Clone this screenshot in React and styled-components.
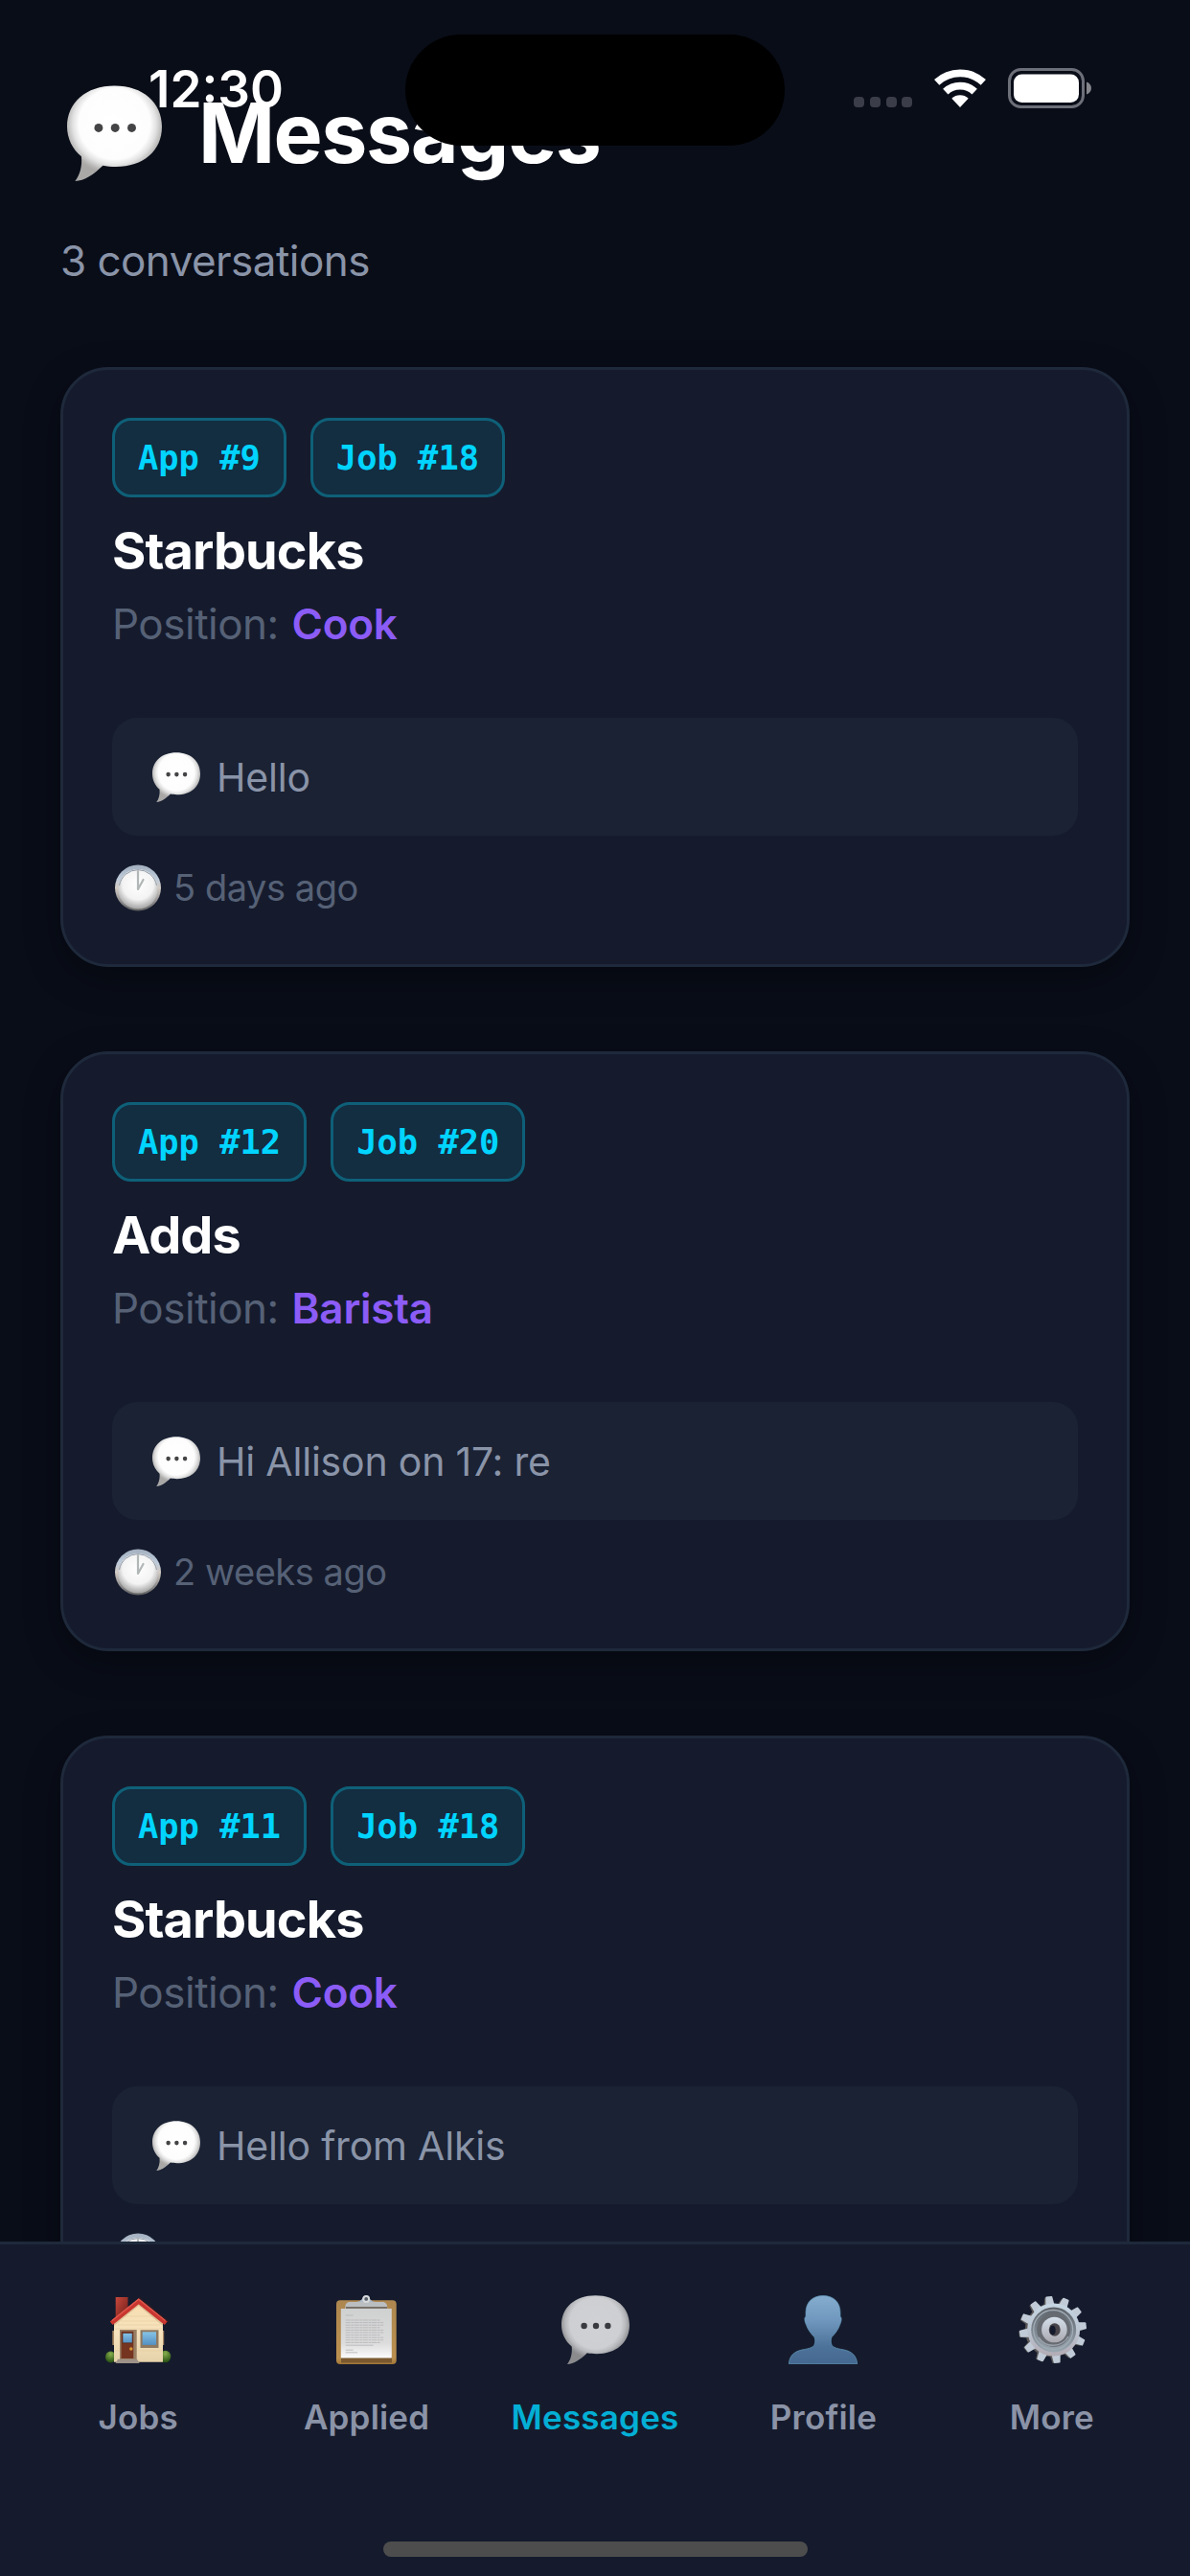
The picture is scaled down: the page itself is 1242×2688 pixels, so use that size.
import React from 'react';
import styled, { createGlobalStyle } from 'styled-components';

const conversations = [
  { id: 1, app: 9, job: 18, company: 'Starbucks', position: 'Cook', message: 'Hello', time: '5 days ago' },
  { id: 2, app: 12, job: 20, company: 'Adds', position: 'Barista', message: 'Hi Allison on 17: re', time: '2 weeks ago' },
  { id: 3, app: 11, job: 18, company: 'Starbucks', position: 'Cook', message: 'Hello from Alkis' },
];

const tabs = [
  { label: 'Jobs', icon: HouseIcon },
  { label: 'Applied', icon: ClipboardIcon },
  { label: 'Messages', icon: BubbleIcon, active: true },
  { label: 'Profile', icon: PersonIcon },
  { label: 'More', icon: GearIcon },
];

export default function App() {
  return (
    <Screen>
      <GlobalStyle />
      <Content>
        <Heading>
          <BubbleIcon width="99" height="100" />
          <Title>Messages</Title>
        </Heading>
        <Subtitle>3 conversations</Subtitle>
        <List>
          {conversations.map(item => (
            <Card key={item.id}>
              <Chips>
                <Chip>App #{item.app}</Chip>
                <Chip>Job #{item.job}</Chip>
              </Chips>
              <Company>{item.company}</Company>
              <Position>
                Position: <strong>{item.position}</strong>
              </Position>
              <Preview>
                <BubbleIcon width="50" height="52" />
                <span>{item.message}</span>
              </Preview>
              <Time>
                <ClockIcon />
                {item.time && <span>{item.time}</span>}
              </Time>
            </Card>
          ))}
        </List>
      </Content>
      <TabBar>
        <Tabs>
          {tabs.map(({ label, icon: Icon, active }) => (
            <Tab key={label} $active={active}>
              <Icon />
              <TabLabel>{label}</TabLabel>
            </Tab>
          ))}
        </Tabs>
        <HomeIndicator />
      </TabBar>
      <StatusBar>
        <Clock>12:30</Clock>
        <Island />
        <StatusIcons>
          <Dots>
            <i />
            <i />
            <i />
            <i />
          </Dots>
          <WifiIcon />
          <BatteryIcon />
        </StatusIcons>
      </StatusBar>
    </Screen>
  );
}

function BubbleIcon({ width = 71, height = 72 }) {
  return (
    <svg width={width} height={height} viewBox="0 0 71 72" preserveAspectRatio="none">
      <defs>
        <radialGradient id="bubbleFill" gradientUnits="userSpaceOnUse" cx="35.5" cy="29" r="38">
          <stop offset="0" stopColor="#fff" />
          <stop offset="0.7" stopColor="#fdfdfd" />
          <stop offset="0.82" stopColor="#e2e2e2" />
          <stop offset="0.95" stopColor="#b4b3b2" />
          <stop offset="1" stopColor="#a9a8a7" />
        </radialGradient>
      </defs>
      <path
        d="M35.5.3C57 .3 71 13 71 31c0 18.500-14 30.200-34.500 30.200-3.500 0-7-.3-9.700-.9C20 67 13 71.800 6 72c3.500-4.500 5.500-11 4.700-18.500C4 48 0 40 0 31 0 13 14 .3 35.500.3z"
        fill="url(#bubbleFill)"
      />
      <circle cx="23.600" cy="32" r="3.200" fill="#444446" />
      <circle cx="36" cy="32" r="3.200" fill="#444446" />
      <circle cx="48.400" cy="32" r="3.200" fill="#444446" />
    </svg>
  );
}

function ClockIcon() {
  return (
    <svg width="48" height="49" viewBox="0 0 48 49" preserveAspectRatio="none">
      <defs>
        <linearGradient id="clockRim" x1="0" y1="0" x2="0" y2="1">
          <stop offset="0" stopColor="#a3afbe" />
          <stop offset="0.3" stopColor="#bccada" />
          <stop offset="0.5" stopColor="#d3cbc4" />
          <stop offset="0.8" stopColor="#8d8c8c" />
          <stop offset="1" stopColor="#5f5f60" />
        </linearGradient>
        <radialGradient id="clockFace" cx="0.5" cy="0.38" r="0.64">
          <stop offset="0" stopColor="#fff" />
          <stop offset="0.6" stopColor="#f3f3f3" />
          <stop offset="1" stopColor="#9b9b9b" />
        </radialGradient>
      </defs>
      <circle cx="24" cy="24.500" r="24" fill="url(#clockRim)" />
      <circle cx="24" cy="25.800" r="20.800" fill="url(#clockFace)" />
      <path d="M4.500 22a19.800 19.800 0 0 1 39 0" fill="none" stroke="#929ba8" strokeWidth="1" />
      <path d="M24 7v19l5.500-10" fill="none" stroke="#b1b6b6" strokeWidth="2.200" strokeLinejoin="round" strokeLinecap="round" />
    </svg>
  );
}

function HouseIcon() {
  return (
    <svg width="69" height="72" viewBox="0 -2 69 72">
      <defs>
        <linearGradient id="wall" x1="0" y1="0" x2="0" y2="1">
          <stop offset="0" stopColor="#f8deb0" />
          <stop offset="0.5" stopColor="#f6e2bd" />
          <stop offset="1" stopColor="#e6d2aa" />
        </linearGradient>
        <linearGradient id="chimney" x1="0" y1="0" x2="1" y2="1">
          <stop offset="0" stopColor="#c8473b" />
          <stop offset="1" stopColor="#6e1d19" />
        </linearGradient>
        <linearGradient id="glass" x1="0" y1="0" x2="0" y2="1">
          <stop offset="0" stopColor="#86c3e6" />
          <stop offset="1" stopColor="#5590c2" />
        </linearGradient>
        <radialGradient id="bush" cx="0.5" cy="0.25" r="0.75">
          <stop offset="0" stopColor="#86ae4c" />
          <stop offset="1" stopColor="#234c12" />
        </radialGradient>
      </defs>
      <ellipse cx="5.500" cy="62.500" rx="5.500" ry="6" fill="url(#bush)" />
      <ellipse cx="62.500" cy="62" rx="5.800" ry="6.300" fill="url(#bush)" />
      <path d="M10.700 0h12.800v14L10.700 22z" fill="url(#chimney)" />
      <path d="M7.300 35h2v15h-2zM59.500 35h1.700v15h-1.700z" fill="#a58562" />
      <path d="M34.700 5L60 26v41.700H9V26z" fill="url(#wall)" />
      <path d="M16 25h38M13 29h44M20 20h30M10 33h49M10 56h49" stroke="#e5cc9d" strokeWidth=".6" />
      <path d="M34.700 9L9 30v-5L34.700 5 60 25v5z" fill="#c7a67c" opacity=".5" />
      <path d="M34.700.6L66 26" stroke="#2b1b24" strokeWidth="2" />
      <path d="M6.200 27.300L34.700 4.400l28.500 22.900" fill="none" stroke="#c93630" strokeWidth="4.600" />
      <path d="M7 24.500L34.700 2.200 62.500 24.500" fill="none" stroke="#e2584b" strokeWidth="1.300" />
      <path d="M15 34h17.700v31H15z" fill="#9a8064" />
      <path d="M16.500 35.700h12.800V64H16.500z" fill="#75341f" />
      <path d="M18 37.500h10.200v10.300H18z" fill="url(#glass)" stroke="#522316" strokeWidth=".6" />
      <circle cx="26.800" cy="54" r="1.700" fill="#d99a35" />
      <path d="M36.500 34.300h19V53h-19z" fill="#8e7961" />
      <path d="M38.700 36.300H53v13.600H38.700z" fill="url(#glass)" />
      <path d="M13 64.700h20l2.600 4.300H10.600z" fill="#9e9288" />
    </svg>
  );
}

function ClipboardIcon() {
  const lines = [26, 28.6, 31.2, 33.8, 36.4, 39, 41.6, 44.2, 46.8, 49.4];
  return (
    <svg width="63" height="72" viewBox="0 0 63 72">
      <defs>
        <linearGradient id="board" x1="0" y1="0" x2="0" y2="1">
          <stop offset="0" stopColor="#ad8750" />
          <stop offset="0.9" stopColor="#bb904f" />
          <stop offset="1" stopColor="#a17637" />
        </linearGradient>
        <linearGradient id="paper" x1="0" y1="0" x2="0" y2="1">
          <stop offset="0" stopColor="#cfd0d0" />
          <stop offset="0.7" stopColor="#dcdcdd" />
          <stop offset="1" stopColor="#fbfbfc" />
        </linearGradient>
      </defs>
      <rect y="5.300" width="62.700" height="66.700" rx="4" fill="url(#board)" />
      <path d="M5 64h53v6.500H5z" fill="#7b5930" />
      <path d="M4.800 14h53v51.400h-53z" fill="url(#paper)" />
      {lines.map((y, i) => (
        <path key={y} d={`M9.700 ${y}h${i % 3 === 0 ? 36 : 39.5}`} stroke="#b4b4b6" strokeWidth=".8" strokeDasharray="5 .6 3 .5" />
      ))}
      <path d="M9.700 21h7.800M9.700 52.200h29M9.700 57.200h8M9.700 59.800h12.500" stroke="#b4b4b6" strokeWidth=".8" />
      <path d="M21 7c4 0 6-3 7-5h6c1 2 3 5 7 5z" fill="#a9b9cb" />
      <path d="M9.300 14c0-5 1-7 5.500-7H47.500c4.500 0 5.700 2 5.700 7z" fill="#bbbec0" />
      <path d="M10 13h43" stroke="#77716a" strokeWidth="2" />
      <circle cx="31.200" cy="3.900" r="2.900" fill="#575d64" stroke="#d8dbdd" strokeWidth="2" />
    </svg>
  );
}

function PersonIcon() {
  return (
    <svg width="72" height="72" viewBox="0 0 72 72">
      <defs>
        <linearGradient id="person" x1="0" y1="0" x2="0" y2="1">
          <stop offset="0" stopColor="#84adcf" />
          <stop offset="0.35" stopColor="#7198be" />
          <stop offset="0.75" stopColor="#4d7299" />
          <stop offset="1" stopColor="#44688f" />
        </linearGradient>
      </defs>
      <path
        d="M36 .5C25 .5 18 7.500 18 18v4.500c-1.700.5-1.500 4.500.5 8.500 1.500 5 5.200 9.300 8.300 12.500 1.200 2 1.200 5.500.4 7.700C26 54.600 21 55.800 15 56.800 6 58.500 1 63 .3 71.700h71.400C71 63 66 58.500 57 56.800c-6-1-11-2.200-12.200-5.600-.8-2.200-.8-5.700.4-7.700 3.100-3.200 6.800-7.500 8.300-12.500 2-4 2.200-8 .5-8.500V18C54 7.500 47 .5 36 .5z"
        fill="url(#person)"
        stroke="#6398b9"
        strokeWidth=".7"
      />
    </svg>
  );
}

function GearIcon() {
  const teeth = Array.from({ length: 12 }, (_, i) => i * 30 - 7);
  return (
    <svg width="72" height="72" viewBox="0 0 72 72">
      <defs>
        <linearGradient id="gear" x1="0" y1="0" x2="0" y2="1">
          <stop offset="0" stopColor="#c5d6e2" />
          <stop offset="0.5" stopColor="#bcc6d3" />
          <stop offset="1" stopColor="#b3abb4" />
        </linearGradient>
        <linearGradient id="gearDish" x1="0" y1="0" x2="0" y2="1">
          <stop offset="0" stopColor="#5d6268" />
          <stop offset="0.5" stopColor="#7c8690" />
          <stop offset="1" stopColor="#99a6b0" />
        </linearGradient>
        <linearGradient id="hub" x1="0" y1="0" x2="0" y2="1">
          <stop offset="0" stopColor="#d5e0eb" />
          <stop offset="1" stopColor="#aaa8b0" />
        </linearGradient>
      </defs>
      <g fill="#5d5a59">
        {teeth.map(a => (
          <path key={a} d="M24-5.500l10.300 2.300v6.400L24 5.500z" transform={`translate(35.600 36.500) rotate(${a})`} />
        ))}
        <circle cx="35.800" cy="36.500" r="28" />
      </g>
      <g fill="#c0cbd7">
        {teeth.map(a => (
          <path key={a} d="M25-6l9.200 1.500q.8.200.8 1.200v6.600q0 1-.8 1.200L25 6z" transform={`translate(37 36) rotate(${a}) scale(1 .78)`} />
        ))}
      </g>
      <circle cx="37.700" cy="36" r="27.500" fill="url(#gear)" />
      <circle cx="37.700" cy="36" r="23.500" fill="url(#gearDish)" />
      <circle cx="37.200" cy="36" r="20.500" fill="none" stroke="#a0abb4" strokeWidth="1.300" />
      <circle cx="37.700" cy="36.300" r="17.500" fill="#666a71" />
      <path d="M22 44a18 18 0 0 0 31-1" fill="none" stroke="#9aa0a9" strokeWidth="1.500" />
      <circle cx="38.400" cy="36" r="13.300" fill="url(#hub)" />
      <ellipse cx="38.700" cy="36" rx="6" ry="6.800" fill="#474349" />
      <ellipse cx="36.700" cy="36.500" rx="3" ry="4.800" fill="#151b2d" />
    </svg>
  );
}

function WifiIcon() {
  return (
    <svg width="54" height="40" viewBox="0 0 54 40">
      <path d="M2.700 13.900a35.700 35.700 0 0 1 48.600 0M11.800 23.700a22.300 22.300 0 0 1 30.400 0" fill="none" stroke="#fff" strokeWidth="7.800" />
      <path d="M27 40l-8.700-9.300a12.700 12.700 0 0 1 17.400 0z" fill="#fff" />
    </svg>
  );
}

function BatteryIcon() {
  return (
    <svg width="88" height="42" viewBox="0 0 88 42">
      <rect x="1.500" y="1.500" width="77" height="39" rx="12" fill="none" stroke="#6d6f78" strokeWidth="3" />
      <rect x="6" y="6.500" width="68" height="29.500" rx="8.500" fill="#fff" />
      <path d="M82 14.500c3 1 5 3.300 5 6.500s-2 5.500-5 6.500z" fill="#84868c" />
    </svg>
  );
}

const GlobalStyle = createGlobalStyle`
  * {
    box-sizing: border-box;
  }

  body {
    margin: 0;
    background: #090d18;
    font-family: Inter, 'Liberation Sans', sans-serif;
  }

  svg {
    display: block;
    flex: none;
  }
`;

const Screen = styled.div`
  position: relative;
  display: flex;
  flex-direction: column;
  width: 1242px;
  height: 2688px;
  overflow: hidden;
  background: #090d18;
`;

const Content = styled.main`
  flex: 1;
  min-height: 0;
  overflow: hidden;
  padding: 87px 63px 0;
`;

const Heading = styled.header`
  display: flex;
  align-items: center;
  gap: 38px;
  height: 104px;
  padding-left: 7px;
`;

const Title = styled.h1`
  margin: 0;
  font-size: 86px;
  line-height: 104px;
  font-weight: 700;
  letter-spacing: -1.500px;
  color: #fff;
`;

const Subtitle = styled.p`
  margin: 54px 0 84px;
  font-size: 44px;
  line-height: 54px;
  letter-spacing: -0.550px;
  color: #8a94a8;
`;

const List = styled.section`
  display: flex;
  flex-direction: column;
  gap: 88px;
`;

const Card = styled.article`
  height: 626px;
  padding: 50px 51px 0;
  border: 3px solid #1e293b;
  border-radius: 50px;
  background: #151b2d;
  box-shadow: 0 12px 36px rgba(0, 0, 0, 0.36);
`;

const Chips = styled.div`
  display: flex;
  gap: 25px;
`;

const Chip = styled.span`
  height: 83px;
  padding: 0 24px;
  border: 3px solid #0e6078;
  border-radius: 20px;
  background: #132d41;
  font-family: 'DejaVu Sans Mono', monospace;
  font-size: 35.400px;
  line-height: 78px;
  font-weight: 700;
  color: #00d4ff;
`;

const Company = styled.h2`
  margin: 23px 0 0;
  font-size: 54px;
  line-height: 66px;
  font-weight: 700;
  letter-spacing: -0.900px;
  color: #fff;
`;

const Position = styled.p`
  margin: 16px 0 71px;
  font-size: 44px;
  line-height: 54px;
  letter-spacing: -0.500px;
  color: #566176;

  strong {
    margin-left: 2px;
    font-weight: 600;
    letter-spacing: -0.250px;
    color: #8b5cf6;
  }
`;

const Preview = styled.div`
  display: flex;
  align-items: center;
  gap: 17px;
  height: 123px;
  padding-left: 42px;
  border-radius: 26px;
  background: #1a2234;
  font-size: 41px;
  letter-spacing: -0.200px;
  color: #8a94a8;
`;

const Time = styled.div`
  display: flex;
  align-items: center;
  gap: 13px;
  height: 50px;
  margin-top: 29px;
  padding-left: 3px;
  font-size: 38px;
  letter-spacing: -0.450px;
  color: #566176;
`;

const TabBar = styled.nav`
  display: flex;
  flex-direction: column;
  justify-content: space-between;
  align-items: center;
  position: relative;
  height: 349px;
  padding: 53px 25px 20px;
  border-top: 3px solid #1e293b;
  background: #151b2d;
`;

const Tabs = styled.div`
  display: flex;
  width: 100%;
`;

const Tab = styled.div`
  flex: 1;
  display: flex;
  flex-direction: column;
  align-items: center;
  gap: 34px;
  color: ${props => (props.$active ? '#00d4ff' : '#8b93a7')};
  opacity: ${props => (props.$active ? 0.8 : 1)};
`;

const TabLabel = styled.span`
  font-size: 35px;
  line-height: 42px;
  font-weight: 600;
  letter-spacing: 0.200px;
`;

const HomeIndicator = styled.div`
  width: 443px;
  height: 16px;
  border-radius: 8px;
  background: #4d4d4d;
`;

const StatusBar = styled.div`
  position: absolute;
  top: 36px;
  left: 0;
  display: grid;
  grid-template-columns: 423px 396px 423px;
  align-items: center;
  width: 1242px;
  height: 116px;
`;

const Clock = styled.span`
  padding: 0 0 3px 28px;
  font-size: 53px;
  font-weight: 600;
  text-align: center;
  color: #fff;
`;

const Island = styled.div`
  height: 116px;
  border-radius: 58px;
  background: #000;
`;

const StatusIcons = styled.div`
  display: flex;
  align-items: center;
  padding: 0 0 4px 72px;

  svg {
    margin-left: 23px;
  }
`;

const Dots = styled.div`
  display: flex;
  gap: 5.800px;
  padding-top: 29px;

  i {
    width: 11px;
    height: 11px;
    border-radius: 4px;
    background: #3b3d49;
  }
`;
